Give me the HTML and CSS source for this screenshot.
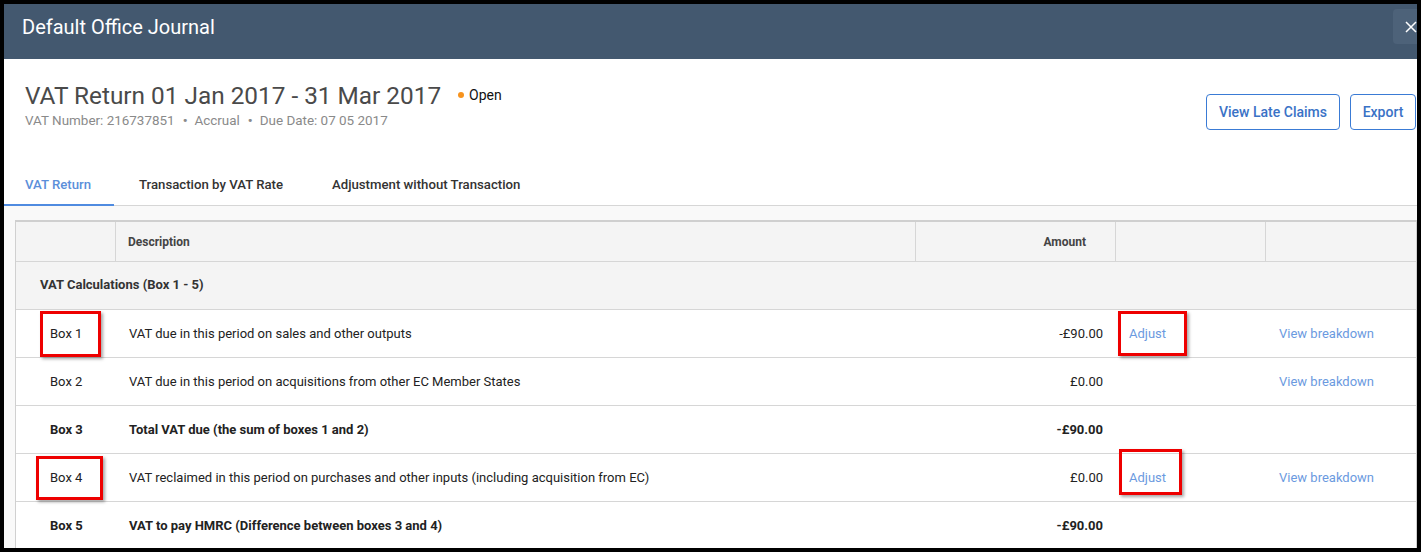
FILE: index.html
```html
<!DOCTYPE html>
<html>
<head>
<meta charset="utf-8">
<link rel="stylesheet" href="styles.css">
</head>
<body>
<div class="frame">
  <header class="topbar">
    <h1 class="topbar-title">Default Office Journal</h1>
    <button class="close-btn" aria-label="Close">
      <svg width="12" height="12" viewBox="0 0 12 12"><path d="M1 1 L11 11 M11 1 L1 11" stroke="#fff" stroke-width="1.5" fill="none"/></svg>
    </button>
  </header>
  <section class="summary">
    <div class="summary-info">
      <div class="title-row">
        <h2 class="title">VAT Return 01 Jan 2017 - 31 Mar 2017</h2>
        <span class="status"><span class="dot"></span>Open</span>
      </div>
      <div class="meta">VAT Number: 216737851<span class="sep">•</span>Accrual<span class="sep">•</span>Due Date: 07 05 2017</div>
    </div>
    <div class="actions">
      <button class="btn btn-wide">View Late Claims</button>
      <button class="btn btn-narrow">Export</button>
    </div>
  </section>
  <nav class="tabs">
    <div class="tab active">VAT Return</div>
    <div class="tab">Transaction by VAT Rate</div>
    <div class="tab">Adjustment without Transaction</div>
  </nav>
  <div class="content">
    <div class="table">
      <div class="row head">
        <div class="c c1"></div>
        <div class="c c2">Description</div>
        <div class="c c3">Amount</div>
        <div class="c c4"></div>
        <div class="c c5"></div>
      </div>
      <div class="row section">
        <div class="c sect">VAT Calculations (Box 1 - 5)</div>
      </div>
      <div class="row">
        <div class="c c1">Box 1<span class="mark mark-b1"></span></div>
        <div class="c c2">VAT due in this period on sales and other outputs</div>
        <div class="c c3">-£90.00</div>
        <div class="c c4"><a class="link">Adjust</a><span class="mark mark-a1"></span></div>
        <div class="c c5"><a class="link">View breakdown</a></div>
      </div>
      <div class="row">
        <div class="c c1">Box 2</div>
        <div class="c c2">VAT due in this period on acquisitions from other EC Member States</div>
        <div class="c c3">£0.00</div>
        <div class="c c4"></div>
        <div class="c c5"><a class="link">View breakdown</a></div>
      </div>
      <div class="row bold">
        <div class="c c1">Box 3</div>
        <div class="c c2">Total VAT due (the sum of boxes 1 and 2)</div>
        <div class="c c3">-£90.00</div>
        <div class="c c4"></div>
        <div class="c c5"></div>
      </div>
      <div class="row">
        <div class="c c1">Box 4<span class="mark mark-b4"></span></div>
        <div class="c c2">VAT reclaimed in this period on purchases and other inputs (including acquisition from EC)</div>
        <div class="c c3">£0.00</div>
        <div class="c c4"><a class="link">Adjust</a><span class="mark mark-a4"></span></div>
        <div class="c c5"><a class="link">View breakdown</a></div>
      </div>
      <div class="row bold">
        <div class="c c1">Box 5</div>
        <div class="c c2">VAT to pay HMRC (Difference between boxes 3 and 4)</div>
        <div class="c c3">-£90.00</div>
        <div class="c c4"></div>
        <div class="c c5"></div>
      </div>
    </div>
  </div>
</div>
</body>
</html>
```

FILE: styles.css
```css
html, body {
  margin: 0;
  padding: 0;
  background: #000;
}
body {
  padding: 4px 4px 0 4px;
  height: 552px;
  box-sizing: border-box;
  overflow: hidden;
  font-family: Roboto, "Liberation Sans", sans-serif;
}
.frame {
  width: 1413px;
  height: 544px;
  background: #fff;
  overflow: hidden;
  display: flex;
  flex-direction: column;
}
.topbar {
  height: 55px;
  background: #43586f;
  display: flex;
  align-items: flex-start;
  justify-content: space-between;
  flex-shrink: 0;
}
.topbar-title {
  margin: 11px 0 0 18px;
  font-size: 20px;
  line-height: 24px;
  font-weight: 400;
  color: #fff;
}
.close-btn {
  width: 32px;
  height: 35px;
  margin: 5px -8px 0 0;
  border: none;
  border-radius: 4px;
  background: #4d6279;
  display: flex;
  align-items: center;
  padding: 0 0 0 12px;
}
.summary {
  height: 104px;
  display: flex;
  justify-content: space-between;
  padding: 0 0 0 21px;
  flex-shrink: 0;
}
.summary-info {
  padding-top: 23px;
}
.title-row {
  display: flex;
  align-items: center;
}
.title {
  margin: 0;
  font-size: 24.35px;
  font-weight: 400;
  color: #4a4a4a;
  line-height: 28px;
}
.status {
  margin-left: 17px;
  font-size: 14px;
  color: #111;
  display: flex;
  align-items: center;
  position: relative;
  top: -1px;
}
.dot {
  width: 6px;
  height: 6px;
  border-radius: 50%;
  background: #f7931e;
  margin-right: 5px;
}
.meta {
  margin-top: 3px;
  font-size: 13.45px;
  color: #8a8a8a;
}
.sep {
  margin: 0 7px 0 8px;
  font-weight: 700;
}
.actions {
  display: flex;
  gap: 10px;
  padding-top: 35px;
  margin-right: 1px;
}
.btn {
  height: 36px;
  padding: 0;
  border: 1px solid #3a7bd5;
  border-radius: 4px;
  background: #fff;
  color: #3a72c6;
  font-family: Roboto, "Liberation Sans", sans-serif;
  font-size: 14px;
  font-weight: 500;
  text-align: center;
}
.btn-wide { width: 134px; }
.btn-narrow { width: 66px; }
.tabs {
  display: flex;
  height: 42px;
  border-bottom: 1px solid #d6d6d6;
  flex-shrink: 0;
}
.tab {
  padding: 2px 24px 0 25px;
  font-size: 13.2px;
  font-weight: 500;
  color: #333;
  display: flex;
  align-items: center;
  border-bottom: 2px solid transparent;
  margin-bottom: -1px;
}
.tab.active {
  width: 110px;
  box-sizing: border-box;
  padding: 2px 0 0 21px;
  color: #5b8fda;
  border-bottom-color: #4f8be0;
}
.content {
  flex: 1;
  background: #f9f9f9;
  padding: 14px 0 0 11px;
}
.table {
  width: 1400px;
  background: #fff;
  border-top: 2px solid #cfcfcf;
  border-left: 1px solid #d0d0d0;
  border-right: 1px solid #d0d0d0;
}
.row {
  display: flex;
  height: 47px;
  border-bottom: 1px solid #d6d6d6;
  font-size: 13px;
  color: #222;
}
.row.head {
  height: 39px;
  background: #f4f4f4;
  font-weight: 700;
  font-size: 12px;
  color: #444;
}
.row.section {
  height: 47px;
  background: #f4f4f4;
}
.row.bold {
  font-weight: 700;
}
.c {
  display: flex;
  align-items: center;
  position: relative;
  box-sizing: border-box;
}
.c1 { width: 100px; padding-left: 34px; }
.c2 { width: 800px; padding-left: 13px; }
.c3 { width: 200px; justify-content: flex-end; padding-right: 13px; }
.c4 { width: 150px; padding-left: 13px; }
.c5 { width: 149px; padding-left: 13px; }
.head .c { border-right: 1px solid #d6d6d6; }
.head .c5 { border-right: none; }
.head .c1 { padding-left: 0; }
.head .c2 { padding-left: 12px; }
.head .c3 { padding-right: 29px; }
.sect {
  padding: 0 0 2px 24px;
  font-weight: 700;
  font-size: 13px;
  color: #333;
}
.link {
  color: #6b9ae0;
}
.mark {
  position: absolute;
  border: 3px solid #ee0000;
  box-shadow: 2px 2px 3px rgba(0,0,0,0.35);
  box-sizing: border-box;
}
.mark-b1 { left: 24px; top: 1px; width: 61px; height: 46px; }
.mark-a1 { left: 2px; top: 1px; width: 69px; height: 45px; }
.mark-b4 { left: 20px; top: 2px; width: 67px; height: 44px; }
.mark-a4 { left: 3px; top: -5px; width: 63px; height: 46px; }
```
